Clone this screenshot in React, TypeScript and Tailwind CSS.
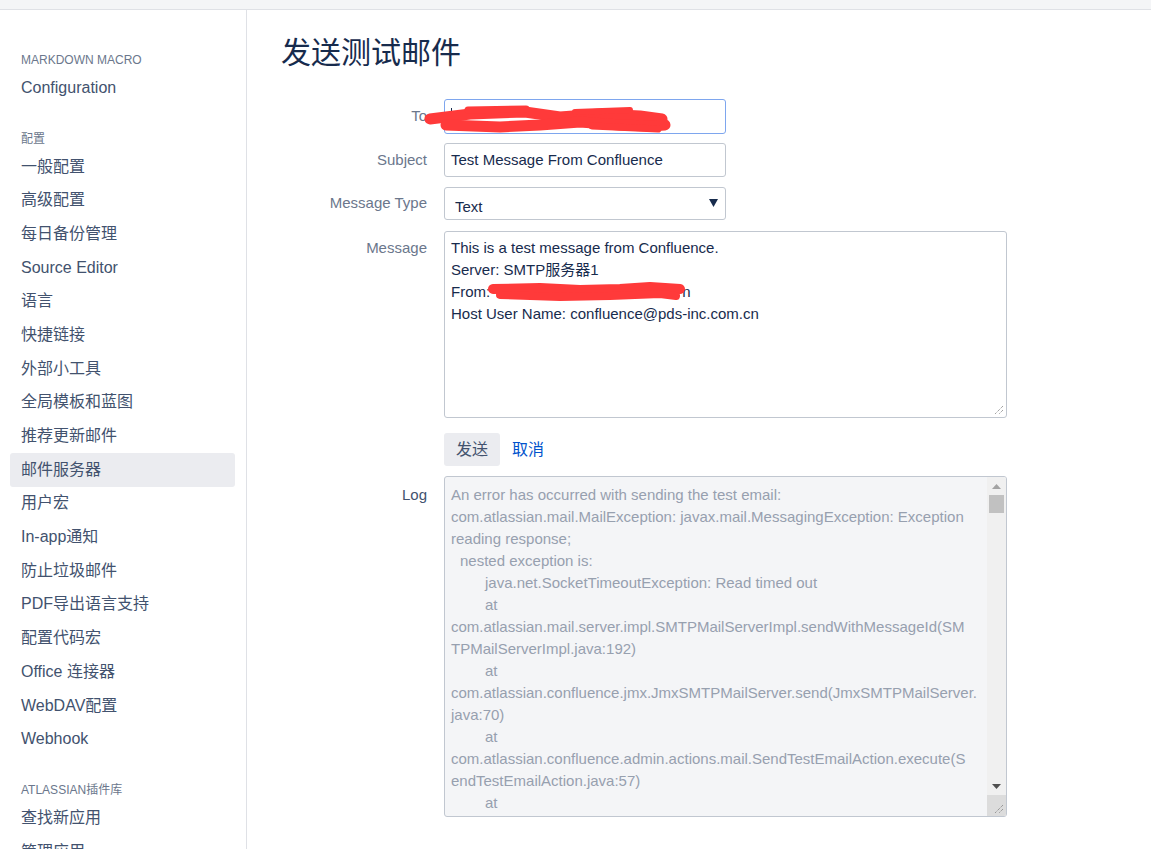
const font = { fontFamily: '"Liberation Sans", "Noto Sans CJK SC", sans-serif' };

type NavGroup = { title: string; items: string[] };

const groups: NavGroup[] = [
  { title: "MARKDOWN MACRO", items: ["Configuration"] },
  {
    title: "配置",
    items: [
      "一般配置",
      "高级配置",
      "每日备份管理",
      "Source Editor",
      "语言",
      "快捷链接",
      "外部小工具",
      "全局模板和蓝图",
      "推荐更新邮件",
      "邮件服务器",
      "用户宏",
      "In-app通知",
      "防止垃圾邮件",
      "PDF导出语言支持",
      "配置代码宏",
      "Office 连接器",
      "WebDAV配置",
      "Webhook",
    ],
  },
  { title: "ATLASSIAN插件库", items: ["查找新应用", "管理应用"] },
];

const logLines: [number, string][] = [
  [0, "An error has occurred with sending the test email:"],
  [0, "com.atlassian.mail.MailException: javax.mail.MessagingException: Exception"],
  [0, "reading response;"],
  [1, "nested exception is:"],
  [2, "java.net.SocketTimeoutException: Read timed out"],
  [2, "at"],
  [0, "com.atlassian.mail.server.impl.SMTPMailServerImpl.sendWithMessageId(SM"],
  [0, "TPMailServerImpl.java:192)"],
  [2, "at"],
  [0, "com.atlassian.confluence.jmx.JmxSMTPMailServer.send(JmxSMTPMailServer."],
  [0, "java:70)"],
  [2, "at"],
  [0, "com.atlassian.confluence.admin.actions.mail.SendTestEmailAction.execute(S"],
  [0, "endTestEmailAction.java:57)"],
  [2, "at"],
];

const Grip = () => (
  <svg width="12" height="12" viewBox="0 0 12 12" className="absolute bottom-[2px] right-[2px]">
    <line x1="11" y1="3" x2="3" y2="11" stroke="#7a7a7a" strokeWidth="1" strokeDasharray="1 1" />
    <line x1="11" y1="7" x2="7" y2="11" stroke="#7a7a7a" strokeWidth="1" strokeDasharray="1 1" />
  </svg>
);

function Sidebar() {
  return (
    <aside className="w-[247px] shrink-0 border-r border-[#dfe1e6] pl-[10px] pr-[11px] pt-[40px]">
      {groups.map((g, gi) => (
        <div key={g.title} className={gi > 0 ? "mt-[24px]" : ""}>
          <div className="h-[21px] px-[11px] text-[12px] leading-[21px] text-[#6b778c]">{g.title}</div>
          {g.items.map((item) => (
            <div
              key={item}
              className={`flex h-[33.7px] items-center rounded-[3px] px-[11px] text-[16px] text-[#42526e] ${
                item === "邮件服务器" ? "bg-[#ebecf0]" : ""
              }`}
            >
              {item}
            </div>
          ))}
        </div>
      ))}
    </aside>
  );
}

function Label({ children, dark }: { children: string; dark?: boolean }) {
  return (
    <div className={`w-[146px] shrink-0 text-right text-[15px] ${dark ? "text-[#42526e]" : "text-[#6b778c]"}`}>
      {children}
    </div>
  );
}

function Form() {
  return (
    <div className="flex flex-col">
      <div className="flex items-center gap-[17px]">
        <Label>To</Label>
        <div className="flex h-[35px] w-[282px] items-center rounded-[3px] border border-[#7ea6ee] px-[6px] text-[15px] text-[#172b4d]">
          <span className="h-[18px] w-px bg-[#172b4d]" />
        </div>
      </div>

      <div className="mt-[9px] flex items-center gap-[17px]">
        <Label>Subject</Label>
        <div className="flex h-[34px] w-[282px] items-center rounded-[3px] border border-[#c1c7d0] px-[6px] text-[15px] text-[#172b4d]">
          Test Message From Confluence
        </div>
      </div>

      <div className="mt-[10px] flex items-center gap-[17px]">
        <Label>Message Type</Label>
        <div className="flex h-[33px] w-[282px] items-center justify-between rounded-[3px] border border-[#c1c7d0] pl-[10px] pr-[7px] text-[15px] text-[#172b4d]">
          <span className="pt-[8px]">Text</span>
          <svg width="9" height="8" viewBox="0 0 9 8" className="-mt-[1px]">
            <path d="M0 0 H9 L4.5 8 Z" fill="#172b4d" />
          </svg>
        </div>
      </div>

      <div className="mt-[11px] flex items-start gap-[17px]">
        <div className="pt-[6px]">
          <Label>Message</Label>
        </div>
        <div className="relative h-[187px] w-[563px] rounded-[3px] border border-[#c1c7d0] px-[6px] pt-[5px] text-[15px] leading-[22px] text-[#172b4d]">
          <div>This is a test message from Confluence.</div>
          <div>Server: SMTP服务器1</div>
          <div>From: <span className="ml-[188px]">n</span></div>
          <div>Host User Name: confluence@pds-inc.com.cn</div>
          <Grip />
        </div>
      </div>

      <div className="mt-[15px] flex items-center gap-[12px] pl-[163px]">
        <button className="h-[33px] w-[56px] rounded-[3px] bg-[#ebecf0] text-[16px] text-[#42526e]">发送</button>
        <span className="text-[16px] text-[#0052cc]">取消</span>
      </div>

      <div className="mt-[10px] flex items-start gap-[17px]">
        <div className="pt-[8px]">
          <Label dark>Log</Label>
        </div>
        <div className="flex h-[341px] w-[563px] overflow-hidden rounded-[3px] border border-[#c1c7d0] bg-[#f4f5f7]">
          <div className="min-w-0 flex-1 overflow-hidden pl-[6px] pt-[7px] text-[15px] leading-[22px] text-[#97a0af]">
            {logLines.map(([indent, text], i) => (
              <div
                key={i}
                className={`whitespace-pre ${indent === 1 ? "pl-[9px]" : indent === 2 ? "pl-[34px]" : ""}`}
              >
                {text}
              </div>
            ))}
          </div>
          <div className="flex w-[19px] shrink-0 flex-col bg-[#f0f0f0]">
            <div className="flex h-[18px] items-center justify-center">
              <svg width="9" height="5" viewBox="0 0 9 5">
                <path d="M0 5 H9 L4.5 0 Z" fill="#a3a3a3" />
              </svg>
            </div>
            <div className="mx-[2px] h-[18px] bg-[#c1c1c1]" />
            <div className="flex-1" />
            <div className="flex h-[18px] items-center justify-center">
              <svg width="9" height="5" viewBox="0 0 9 5">
                <path d="M0 0 H9 L4.5 5 Z" fill="#505050" />
              </svg>
            </div>
            <div className="relative h-[21px] bg-[#dcdcdc]">
              <Grip />
            </div>
          </div>
        </div>
      </div>
    </div>
  );
}

function Scribbles() {
  return (
    <svg width="1151" height="849" className="pointer-events-none absolute left-0 top-0">
      <g stroke="#ff3a3a" strokeLinecap="round" strokeLinejoin="round" fill="none">
        <path d="M430 119 L470 114 L525 112 L560 117 L600 114 L640 116 L662 119" strokeWidth="11" />
        <path d="M446 125 L500 127 L540 125 L580 122 L620 125 L650 126 L665 125" strokeWidth="11" />
        <path d="M468 110 L526 109" strokeWidth="7" />
        <path d="M575 112 L630 110" strokeWidth="6" />
        <path d="M592 126 L658 129" strokeWidth="7" />
        <path d="M493 289 L540 288 L580 290 L620 289 L650 287 L680 289" strokeWidth="10" />
        <path d="M500 295 L560 297 L610 296 L660 294 L676 296" strokeWidth="8" />
      </g>
    </svg>
  );
}

export default function App() {
  return (
    <div className="relative h-[849px] w-[1151px] overflow-hidden bg-white" style={font}>
      <div className="h-[10px] border-b border-[#dfe1e6] bg-[#f4f5f7]" />
      <div className="flex h-[839px]">
        <Sidebar />
        <main className="flex-1 pl-[34px] pt-[25px]">
          <h1 className="text-[30px] font-normal leading-[36px] text-[#172b4d]">发送测试邮件</h1>
          <div className="mt-[28px]">
            <Form />
          </div>
        </main>
      </div>
      <Scribbles />
    </div>
  );
}
